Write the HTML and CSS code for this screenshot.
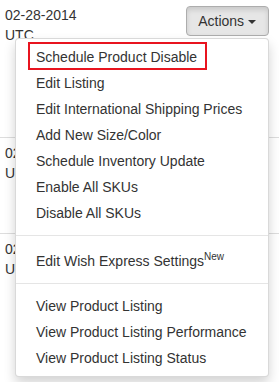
FILE: index.html
```html
<!DOCTYPE html>
<html lang="en">
<head>
    <meta charset="UTF-8">
    <meta name="viewport" content="width=device-width, initial-scale=1.0">
    <title>Product Actions</title>
    <link rel="stylesheet" href="styles.css">
</head>
<body>
    <div class="list">
        <div class="row row-first">
            <div class="date">02-28-2014<br>UTC</div>
            <div class="btn-group">
                <button class="btn active">Actions <span class="caret"></span></button>
                <ul class="dropdown-menu">
                    <li><a href="#">Schedule Product Disable</a><span class="highlight"></span></li>
                    <li><a href="#">Edit Listing</a></li>
                    <li><a href="#">Edit International Shipping Prices</a></li>
                    <li><a href="#">Add New Size/Color</a></li>
                    <li><a href="#">Schedule Inventory Update</a></li>
                    <li><a href="#">Enable All SKUs</a></li>
                    <li><a href="#">Disable All SKUs</a></li>
                    <li class="divider"></li>
                    <li><a href="#">Edit Wish Express Settings<sup>New</sup></a></li>
                    <li class="divider"></li>
                    <li><a href="#">View Product Listing</a></li>
                    <li><a href="#">View Product Listing Performance</a></li>
                    <li><a href="#">View Product Listing Status</a></li>
                </ul>
            </div>
        </div>
        <div class="row row-mid">
            <div class="date">02-28-2014<br>UTC</div>
            <div class="btn-group">
                <button class="btn">Actions <span class="caret"></span></button>
            </div>
        </div>
        <div class="row">
            <div class="date">02-28-2014<br>UTC</div>
            <div class="btn-group">
                <button class="btn">Actions <span class="caret"></span></button>
            </div>
        </div>
    </div>
</body>
</html>
```

FILE: styles.css
```css
body {
    font-family: 'Liberation Sans', Arial, sans-serif;
    font-size: 14px;
    line-height: 20px;
    color: #333;
    margin: 0;
    background: #fff;
}
.list {
    width: 100%;
}
.row {
    display: flex;
    justify-content: space-between;
    align-items: flex-start;
    padding: 5px 10px 0 5px;
    border-top: 1px solid #ddd;
    height: 160px;
    box-sizing: border-box;
}
.row-first {
    border-top: none;
    height: 137px;
}
.row-mid {
    height: 96px;
}
.btn-group {
    position: relative;
    margin-top: 1px;
}
.btn {
    font-family: inherit;
    font-size: 14px;
    line-height: 20px;
    color: #333;
    padding: 4px 12px 4px 11px;
    background: #fff;
    border: 1px solid #ccc;
    border-radius: 4px;
}
.btn.active {
    background: #e6e6e6;
    border-color: #adadad;
    box-shadow: inset 0 3px 5px rgba(0, 0, 0, 0.125);
}
.caret {
    display: inline-block;
    width: 0;
    height: 0;
    vertical-align: middle;
    border-top: 4px solid #333;
    border-left: 4px solid transparent;
    border-right: 4px solid transparent;
}
.dropdown-menu {
    position: absolute;
    top: 100%;
    right: 0;
    z-index: 10;
    min-width: 252px;
    margin: 2px 0 0;
    padding: 5px 0;
    list-style: none;
    background: #fff;
    border: 1px solid rgba(0, 0, 0, 0.15);
    border-radius: 4px;
    box-shadow: 0 6px 12px rgba(0, 0, 0, 0.175);
    white-space: nowrap;
}
.dropdown-menu li {
    position: relative;
}
.dropdown-menu a {
    display: block;
    padding: 3px 20px;
    color: #333;
    text-decoration: none;
}
.dropdown-menu sup {
    font-size: 10px;
    line-height: 18px;
}
.divider {
    height: 1px;
    margin: 9px 0;
    background: #e5e5e5;
}
.highlight {
    position: absolute;
    left: 12px;
    top: -2px;
    width: 179px;
    height: 28px;
    border: 2px solid #e8141f;
    box-sizing: border-box;
}
```
